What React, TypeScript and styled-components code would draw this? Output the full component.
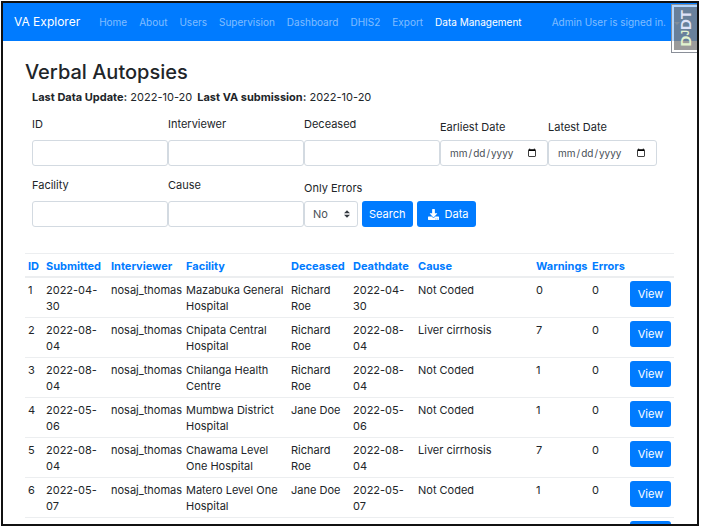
import React from "react";
import styled, { createGlobalStyle } from "styled-components";

const GlobalStyle = createGlobalStyle`
  *, *::before, *::after { box-sizing: border-box; }
  body {
    margin: 0;
    background: #fff;
    color: #212529;
    font-family: Inter, "Liberation Sans", sans-serif;
    font-size: 11px;
    line-height: 16px;
  }
  button, input, select { font: inherit; }
`;

const Frame = styled.div`
  position: relative;
  height: calc(100vh - 6px);
  margin: 1px 3px 0 1px;
  border: 2px solid #111;
  overflow: hidden;
`;

const NavBar = styled.nav`
  display: flex;
  align-items: center;
  height: 38px;
  padding: 0 17px 0 11px;
  background: #007bff;
  font-size: 10px;
  white-space: nowrap;
`;

const Brand = styled.a`
  margin-right: 19px;
  color: #fff;
  font-size: 12px;
  text-decoration: none;
`;

const NavLinks = styled.div`
  display: flex;
  flex: 1;
  gap: 12px;
`;

const NavLink = styled.a<{ $active?: boolean }>`
  color: ${(p) => (p.$active ? "#fff" : "rgba(255, 255, 255, 0.5)")};
  text-decoration: none;
`;

const Caret = styled.span`
  display: inline-block;
  margin-left: 8px;
  border: 3px solid transparent;
  border-top-color: currentColor;
  border-bottom: 0;
  vertical-align: middle;
`;

const DebugTab = styled.button`
  position: absolute;
  top: 2px;
  right: 0;
  display: flex;
  align-items: center;
  justify-content: center;
  width: 25px;
  height: 47px;
  padding: 0;
  border: 2px solid rgba(255, 255, 255, 0.7);
  border-right: 0;
  outline: 1px solid #8a8f98;
  background: rgba(130, 130, 130, 0.8) padding-box;
  color: #dfe3f8;
`;

const DebugText = styled.span`
  writing-mode: vertical-rl;
  transform: rotate(180deg);
  font-family: "Liberation Sans", sans-serif;
  font-size: 15px;
  font-weight: 700;
`;

const DebugPrefix = styled.span`
  color: #e2f3cf;
`;

const DebugSmall = styled.span`
  font-size: 10px;
`;

const Main = styled.main`
  padding: 19px 23px 0 22px;
`;

const Title = styled.h1`
  margin: 0;
  font-size: 20px;
  font-weight: 500;
  line-height: 24px;
`;

const Summary = styled.div`
  display: flex;
  gap: 5px;
  margin: 5px 7px 11px;
`;

const Filters = styled.form`
  display: flex;
  flex-direction: column;
  gap: 11px;
  margin: 0 7px 26px;
`;

const FilterRow = styled.div`
  display: flex;
  align-items: flex-end;
`;

const Field = styled.div<{ $width: number; $tight?: boolean }>`
  display: flex;
  flex-direction: column;
  gap: ${(p) => (p.$tight ? 5 : 8)}px;
  width: ${(p) => p.$width}px;
`;

const Input = styled.input`
  width: 100%;
  height: 26px;
  padding: 0 8px;
  border: 1px solid #d3dae1;
  border-radius: 3px;
  background: #fff;
  color: #495057;

  &[type="date"] {
    font-size: 10px;
  }
`;

const SelectWrap = styled.div`
  position: relative;
`;

const Select = styled.select`
  display: block;
  width: 100%;
  height: 26px;
  padding: 0 8px;
  border: 1px solid #d3dae1;
  border-radius: 3px;
  appearance: none;
  background: #fff;
  color: #495057;
`;

const Arrows = styled.svg`
  position: absolute;
  top: 9px;
  right: 8px;
  pointer-events: none;
`;

const Button = styled.button`
  display: inline-flex;
  align-items: center;
  justify-content: center;
  gap: 6px;
  height: 26px;
  padding: 0 8px;
  border: 0;
  border-radius: 3px;
  background: #007bff;
  color: #fff;
`;

const Actions = styled.div`
  display: flex;
  gap: 4px;
  margin-left: 4px;
`;

const SearchButton = styled(Button)`
  padding: 0 7px;
`;

const DataButton = styled(Button)`
  padding: 0 8px 0 11px;
`;

const ViewButton = styled(Button)`
  width: 100%;
`;

const Table = styled.table`
  width: 100%;
  table-layout: fixed;
  border-collapse: separate;
  border-spacing: 0;
`;

const Col = styled.col<{ $width?: number }>`
  width: ${(p) => (p.$width ? `${p.$width}px` : "auto")};
`;

const HeadCell = styled.th`
  height: 25px;
  padding: 1px 3px 0;
  border-top: 1px solid #eceef0;
  border-bottom: 2px solid #eceef0;
  text-align: left;
`;

const SortLink = styled.a`
  color: #007bff;
  text-decoration: none;
`;

const Cell = styled.td`
  height: 40px;
  padding: 4px 3px 3px;
  border-bottom: 1px solid #eceef0;
  vertical-align: top;
`;

const ActionCell = styled(Cell)`
  padding-top: 3px;
`;

const columns: { name: string; width?: number }[] = [
  { name: "ID", width: 18 },
  { name: "Submitted", width: 65 },
  { name: "Interviewer", width: 75 },
  { name: "Facility", width: 105 },
  { name: "Deceased", width: 62 },
  { name: "Deathdate", width: 65 },
  { name: "Cause" },
  { name: "Warnings", width: 56 },
  { name: "Errors", width: 38 },
  { name: "", width: 47 },
];

const records = [
  { id: 1, date: "2022-04-30", facility: "Mazabuka General Hospital", deceased: "Richard Roe", cause: "Not Coded", warnings: 0 },
  { id: 2, date: "2022-08-04", facility: "Chipata Central Hospital", deceased: "Richard Roe", cause: "Liver cirrhosis", warnings: 7 },
  { id: 3, date: "2022-08-04", facility: "Chilanga Health Centre", deceased: "Richard Roe", cause: "Not Coded", warnings: 1 },
  { id: 4, date: "2022-05-06", facility: "Mumbwa District Hospital", deceased: "Jane Doe", cause: "Not Coded", warnings: 1 },
  { id: 5, date: "2022-08-04", facility: "Chawama Level One Hospital", deceased: "Richard Roe", cause: "Liver cirrhosis", warnings: 7 },
  { id: 6, date: "2022-05-07", facility: "Matero Level One Hospital", deceased: "Jane Doe", cause: "Not Coded", warnings: 1 },
];

const links = ["Home", "About", "Users", "Supervision", "Dashboard", "DHIS2", "Export", "Data Management"];

function WrappedDate({ value }: { value: string }) {
  return (
    <>
      {value.slice(0, 8)}
      <br />
      {value.slice(8)}
    </>
  );
}

function TextField({ id, label, type = "text", width = 136 }: { id: string; label: string; type?: string; width?: number }) {
  return (
    <Field $width={width} $tight={type === "date"}>
      <label htmlFor={id}>{label}</label>
      <Input id={id} type={type} />
    </Field>
  );
}

export default function App() {
  return (
    <>
      <GlobalStyle />
      <Frame>
        <NavBar>
          <Brand href="#">VA Explorer</Brand>
          <NavLinks>
            {links.map((l) => (
              <NavLink key={l} href="#" $active={l === "Data Management"}>{l}</NavLink>
            ))}
          </NavLinks>
          <NavLink href="#">Admin User is signed in.<Caret /></NavLink>
        </NavBar>
        <DebugTab type="button">
          <DebugText>
            <DebugPrefix>D<DebugSmall>J</DebugSmall></DebugPrefix>DT
          </DebugText>
        </DebugTab>
        <Main>
          <Title>Verbal Autopsies</Title>
          <Summary>
            <span><b>Last Data Update:</b> 2022-10-20</span>
            <span><b>Last VA submission:</b> 2022-10-20</span>
          </Summary>
          <Filters onSubmit={(e) => e.preventDefault()}>
            <FilterRow>
              <TextField id="va-id" label="ID" />
              <TextField id="interviewer" label="Interviewer" />
              <TextField id="deceased" label="Deceased" />
              <TextField id="earliest" label="Earliest Date" type="date" width={108} />
              <TextField id="latest" label="Latest Date" type="date" width={109} />
            </FilterRow>
            <FilterRow>
              <TextField id="facility" label="Facility" />
              <TextField id="cause" label="Cause" />
              <Field $width={54} $tight>
                <label htmlFor="errors">Only&nbsp;Errors</label>
                <SelectWrap>
                  <Select id="errors" defaultValue="No">
                    <option>No</option>
                    <option>Yes</option>
                  </Select>
                  <Arrows width="6" height="8" viewBox="0 0 4 5" aria-hidden="true">
                    <path fill="#343a40" d="M2 0L0 2h4zm0 5L0 3h4z" />
                  </Arrows>
                </SelectWrap>
              </Field>
              <Actions>
                <SearchButton type="submit">Search</SearchButton>
                <DataButton type="button">
                  <svg width="11" height="11" viewBox="0 0 512 512" fill="currentColor" aria-hidden="true">
                    <path d="M216 0h80c13.3 0 24 10.7 24 24v168h87.700c17.800 0 26.700 21.500 14.100 34.100L269.700 378.300c-7.500 7.500-19.800 7.500-27.300 0L90.100 226.100c-12.600-12.600-3.700-34.100 14.100-34.100H192V24c0-13.300 10.700-24 24-24zm296 376v112c0 13.300-10.700 24-24 24H24c-13.300 0-24-10.700-24-24V376c0-13.300 10.700-24 24-24h146.700l49 49c20.100 20.100 52.500 20.100 72.600 0l49-49H488c13.300 0 24 10.700 24 24zm-124 88c0-11-9-20-20-20s-20 9-20 20 9 20 20 20 20-9 20-20zm64 0c0-11-9-20-20-20s-20 9-20 20 9 20 20 20 20-9 20-20z" />
                  </svg>
                  Data
                </DataButton>
              </Actions>
            </FilterRow>
          </Filters>
          <Table>
            <colgroup>
              {columns.map((c) => <Col key={c.name} $width={c.width} />)}
            </colgroup>
            <thead>
              <tr>
                {columns.map((c) => (
                  <HeadCell key={c.name}>{c.name && <SortLink href="#">{c.name}</SortLink>}</HeadCell>
                ))}
              </tr>
            </thead>
            <tbody>
              {records.map((r) => (
                <tr key={r.id}>
                  <Cell>{r.id}</Cell>
                  <Cell><WrappedDate value={r.date} /></Cell>
                  <Cell>nosaj_thomas</Cell>
                  <Cell>{r.facility}</Cell>
                  <Cell>{r.deceased}</Cell>
                  <Cell><WrappedDate value={r.date} /></Cell>
                  <Cell>{r.cause}</Cell>
                  <Cell>{r.warnings}</Cell>
                  <Cell>0</Cell>
                  <ActionCell><ViewButton type="button">View</ViewButton></ActionCell>
                </tr>
              ))}
              <tr>
                <Cell colSpan={9} />
                <ActionCell><ViewButton type="button" aria-label="View" /></ActionCell>
              </tr>
            </tbody>
          </Table>
        </Main>
      </Frame>
    </>
  );
}
